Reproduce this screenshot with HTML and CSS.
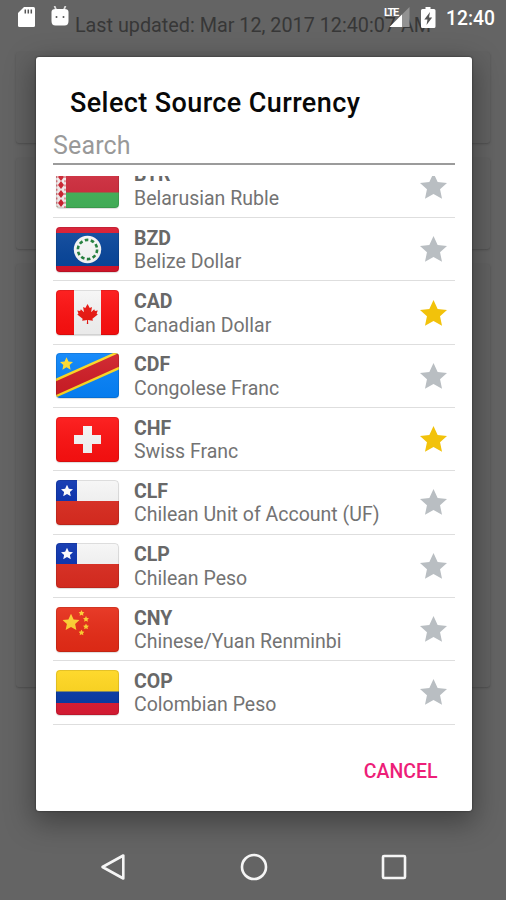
FILE: index.html
```
<!DOCTYPE html>
<html lang="en">
<head>
<meta charset="utf-8">
<title>Select Source Currency</title>
<link rel="stylesheet" href="styles.css">
</head>
<body>
<svg class="defs" width="0" height="0">
  <defs>
    <linearGradient id="fade" x1="0" y1="0" x2="0" y2="1"><stop offset="0" stop-color="#fff" stop-opacity=".08"/><stop offset="1" stop-color="#000" stop-opacity=".05"/></linearGradient>
    <symbol id="shine" viewBox="0 0 63 45"><path fill="url(#fade)" d="M0 0h63v45H0z"/><rect x=".5" y=".5" width="62" height="44" rx="3.500" fill="none" stroke="#000" stroke-opacity=".1"/></symbol>
    <symbol id="star" viewBox="0 0 26 25"><path d="M13 0 17 8.700 26 9.600 19.300 15.700 21.200 24.800 13 20.200 4.800 24.800 6.700 15.700 0 9.600 9 8.700Z"/></symbol>
    <symbol id="chile" viewBox="0 0 63 45"><path fill="#f6f6f6" d="M0 0h63v22H0z"/><path fill="#dc2c20" d="M0 21h63v24H0z"/><path fill="#0730ae" d="M0 0h21v21H0z"/><use href="#star" x="5" y="4.500" width="12" height="12" fill="#fff"/></symbol>
  </defs>
</svg>
<div class="screen">
  <main class="page">
    <p class="updated">Last updated: Mar 12, 2017 12:40:07 AM</p>
    <div class="card small"></div>
    <div class="card medium"></div>
    <div class="card large"></div>
  </main>

  <header class="status">
    <svg class="sd" width="18" height="21" viewBox="0 0 18 21"><path fill="#fff" d="M6 0h9.500Q17 0 17 1.500v17q0 1.500-1.500 1.500h-14Q0 20 0 18.500V6z"/><path stroke="#555" stroke-width="1.500" d="M7.300 2.500v4M10.300 2.500v4M13.300 2.500v4"/></svg>
    <svg class="droid" width="18" height="20" viewBox="0 0 18 20"><path stroke="#ddd" stroke-width="1.800" d="m3.500 0 1.700 4M14.500 0l-1.700 4"/><path fill="#fff" d="M.5 6q0-3 4-3h9q4 0 4 3v9q0 4.500-4 4.500h-9q-4 0-4-4.500z"/><circle cx="5.500" cy="11" r="1" fill="#555"/><circle cx="12.500" cy="11" r="1" fill="#555"/></svg>
    <span class="spacer"></span>
    <span class="network"><svg width="21" height="21" viewBox="0 0 21 21"><path fill="#929292" d="M20.500 0v20H.500z"/><path fill="#fff" d="M13 7.500V20H.500z"/></svg><b>LTE</b></span>
    <svg class="battery" width="15" height="21" viewBox="0 0 15 21"><path fill="#fff" d="M4.500 0h5v2H13q1.500 0 1.500 1.500v16Q14.500 21 13 21H1.500Q0 21 0 19.500v-16Q0 2 1.500 2h3z"/><path fill="#555" d="M9 5 3.300 12.500h3.200L5.500 18l5.700-7.500H8z"/></svg>
    <time>12:40</time>
  </header>

  <section class="dialog">
    <h1>Select Source Currency</h1>
    <div class="search">Search</div>
    <div class="list">
      <div class="row"><svg class="flag" viewBox="0 0 63 45"><path fill="#d02c3d" d="M0 0h63v30H0z"/><path fill="#43b359" d="M0 29.500h63V45H0z"/><path fill="#f6f0f0" d="M0 0h10v45H0z"/><path fill="#cf2230" d="m5 10 3 4-3 4-3-4zM5 18l3 4-3 4-3-4zM5 27l3 4-3 4-3-4zM5 36l3 4-3 4-3-4z"/><path stroke="#dc6972" stroke-width="1.300" stroke-dasharray="2 2.300" d="M.8 0v45M9 0v45"/><use href="#shine"/></svg><div class="name"><b>BYR</b><span>Belarusian Ruble</span></div><svg class="star"><use href="#star"/></svg></div>
      <div class="row"><svg class="flag" viewBox="0 0 63 45"><path fill="#d8142a" d="M0 0h63v45H0z"/><path fill="#07459b" d="M0 6h63v33H0z"/><circle cx="31.500" cy="22.500" r="13.700" fill="#fafafa"/><circle cx="31.500" cy="22.500" r="9.600" fill="none" stroke="#21803b" stroke-width="2.600" stroke-dasharray="3.600 2.430"/><use href="#shine"/></svg><div class="name"><b>BZD</b><span>Belize Dollar</span></div><svg class="star"><use href="#star"/></svg></div>
      <div class="row"><svg class="flag" viewBox="0 0 63 45"><path fill="#fd0f0f" d="M0 0h63v45H0z"/><path fill="#f6f6f6" d="M18 0h27v45H18z"/><path transform="translate(3.500 2.500) scale(.89)" fill="#ec160f" d="m31.500 13 2.500 4.500 2.500-1.300-1 6 3.500-3.300.8 1.800 3.200-.4-1.300 3.200 1.300 1.200-6 4.800.5 2.200-5.500-.8.300 4.600h-1.600l.3-4.600-5.500.8.500-2.200-6-4.800 1.300-1.200-1.300-3.200 3.200.4.800-1.800 3.500 3.300-1-6 2.500 1.300z"/><use href="#shine"/></svg><div class="name"><b>CAD</b><span>Canadian Dollar</span></div><svg class="star on"><use href="#star"/></svg></div>
      <div class="row"><svg class="flag" viewBox="0 0 63 45"><path fill="#0682fa" d="M0 0h63v45H0z"/><path stroke="#ffd91f" stroke-width="17.500" d="M-10 39.500 73 2.500"/><path stroke="#cf1c25" stroke-width="12.500" d="M-10 39.500 73 2.500"/><use href="#star" x="4" y="4" width="13" height="13" fill="#ffdc2c"/><use href="#shine"/></svg><div class="name"><b>CDF</b><span>Congolese Franc</span></div><svg class="star"><use href="#star"/></svg></div>
      <div class="row"><svg class="flag" viewBox="0 0 63 45"><path fill="#fd1010" d="M0 0h63v45H0z"/><path fill="#f7f7f7" d="M27 9h9v9h9v9h-9v9h-9v-9h-9v-9h9z"/><use href="#shine"/></svg><div class="name"><b>CHF</b><span>Swiss Franc</span></div><svg class="star on"><use href="#star"/></svg></div>
      <div class="row"><svg class="flag" viewBox="0 0 63 45"><use href="#chile"/><use href="#shine"/></svg><div class="name"><b>CLF</b><span>Chilean Unit of Account (UF)</span></div><svg class="star"><use href="#star"/></svg></div>
      <div class="row"><svg class="flag" viewBox="0 0 63 45"><use href="#chile"/><use href="#shine"/></svg><div class="name"><b>CLP</b><span>Chilean Peso</span></div><svg class="star"><use href="#star"/></svg></div>
      <div class="row"><svg class="flag" viewBox="0 0 63 45"><path fill="#e62b16" d="M0 0h63v45H0z"/><g fill="#ffd02e"><use href="#star" x="6.500" y="6.500" width="17" height="17"/><use href="#star" x="22.500" y="3" width="6" height="6"/><use href="#star" x="27" y="9" width="6" height="6"/><use href="#star" x="27" y="16.500" width="6" height="6"/><use href="#star" x="22.500" y="22.500" width="6" height="6"/></g><use href="#shine"/></svg><div class="name"><b>CNY</b><span>Chinese/Yuan Renminbi</span></div><svg class="star"><use href="#star"/></svg></div>
      <div class="row"><svg class="flag" viewBox="0 0 63 45"><path fill="#ffd61c" d="M0 0h63v22H0z"/><path fill="#0639a6" d="M0 21.500h63V34H0z"/><path fill="#dc1b34" d="M0 33h63v12H0z"/><use href="#shine"/></svg><div class="name"><b>COP</b><span>Colombian Peso</span></div><svg class="star"><use href="#star"/></svg></div>
    </div>
    <div class="actions"><span class="cancel">CANCEL</span></div>
  </section>

  <nav class="navbar">
    <svg width="28" height="28" viewBox="0 0 28 28"><path d="M24.300 2.500v23L3.500 14z"/></svg>
    <svg width="28" height="28" viewBox="0 0 28 28"><circle cx="14" cy="14" r="12"/></svg>
    <svg width="28" height="28" viewBox="0 0 28 28"><rect x="3" y="3" width="22" height="22" rx="1"/></svg>
  </nav>
</div>
</body>
</html>
```
FILE: styles.css
```
* { box-sizing: border-box; }
body { margin: 0; font-family: Roboto, sans-serif; }
.defs { position: absolute; }
.screen { position: relative; width: 506px; height: 900px; overflow: hidden; background: #646464; }

.page { padding: 14px 16px 0; }
.updated { margin: 0 0 14px; text-align: center; font-size: 19.800px; line-height: 24px; color: #373737; white-space: nowrap; }
.card { margin-bottom: 15px; border-radius: 3px; background: #626262; box-shadow: 0 1px 2px #505050; }
.small { height: 91px; }
.medium { height: 91px; }
.large { height: 423px; }

.status { position: absolute; inset: 0 0 auto; display: flex; align-items: flex-start; height: 32px; padding: 7px 11px 0 18px; color: #fff; }
.droid { margin: -1px 0 0 15px; }
.spacer { flex: 1; }
.network { position: relative; width: 21px; height: 21px; margin-right: 11px; }
.network b { position: absolute; left: -5px; top: 0; font-size: 11px; line-height: 11px; letter-spacing: -1.300px; }
.battery { margin-right: 10px; }
.status time { font-size: 19.300px; line-height: 23px; font-weight: 500; }

.dialog { position: absolute; left: 36px; top: 57px; display: flex; flex-direction: column; width: 435.500px; height: 753.500px; padding: 0 17px; border-radius: 3px; background: #fff; box-shadow: 0 0 2px #222, 0 9px 28px 3px rgba(0,0,0,.34); }
h1 { margin: 29px 0 0 17px; font-size: 27px; line-height: 34px; font-weight: 500; letter-spacing: .4px; color: #080808; white-space: nowrap; }
.search { height: 45px; padding-top: 10px; border-bottom: 2px solid #9b9b9b; font-size: 25px; line-height: 32px; letter-spacing: .15px; color: #999; }
.list { display: flex; flex-direction: column; justify-content: flex-end; height: 548.500px; margin-top: 11px; overflow: hidden; }
.row { display: flex; flex: 0 0 63.300px; align-items: center; padding: 0 7.500px 0 3px; border-bottom: 1.500px solid #dedede; }
.flag { width: 63px; height: 45px; border-radius: 4px; overflow: hidden; box-shadow: 0 1px 1px #ddd; }
.name { flex: 1; display: flex; flex-direction: column; margin: 2px 0 0 15px; font-size: 19.500px; line-height: 23.500px; color: #737373; white-space: nowrap; }
.name b { color: #686868; font-weight: 700; }
.star { width: 27px; height: 26px; fill: #b9bec2; }
.star.on { fill: #f2c20b; }
.actions { display: flex; justify-content: flex-end; padding: 35px 17px 0 0; }
.cancel { font-size: 19.500px; line-height: 24px; font-weight: 500; color: #ed1e78; }

.navbar { position: absolute; inset: auto 0 0; display: flex; justify-content: center; gap: 112.500px; height: 47.500px; padding-left: 1px; }
.navbar svg { fill: none; stroke: #f5f5f5; stroke-width: 2.600; stroke-linejoin: round; }
```
